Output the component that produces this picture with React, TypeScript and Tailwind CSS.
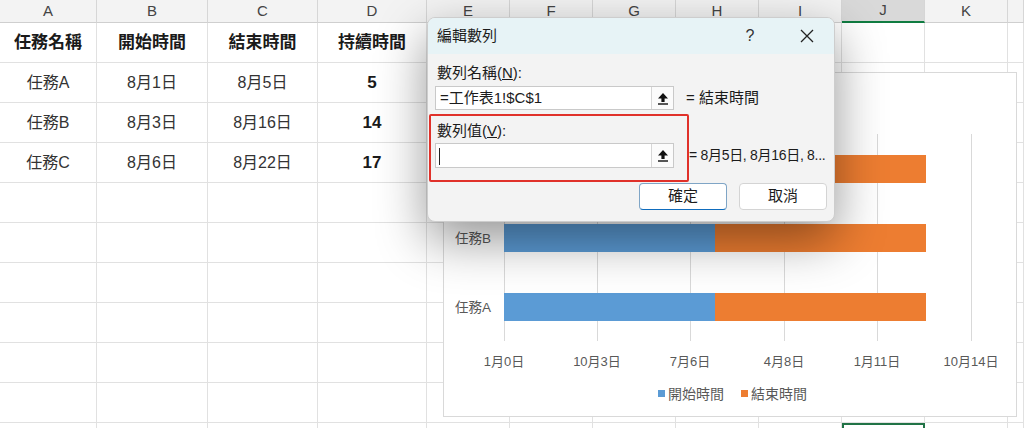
import React from 'react';

const font = { fontFamily: '"Liberation Sans", "Noto Sans CJK TC", sans-serif' };

const cols = [
  { k: 'A', c: 'w-[97px]' },
  { k: 'B', c: 'w-[111px]' },
  { k: 'C', c: 'w-[110px]' },
  { k: 'D', c: 'w-[109px]' },
  { k: 'E', c: 'w-[83px]' },
  { k: 'F', c: 'w-[83px]' },
  { k: 'G', c: 'w-[83px]' },
  { k: 'H', c: 'w-[83px]' },
  { k: 'I', c: 'w-[83px]' },
  { k: 'J', c: 'w-[83px]' },
  { k: 'K', c: 'w-[83px]' },
  { k: '', c: 'w-[16px]' },
];

const rows: { v: string[]; bold: boolean[] }[] = [
  { v: ['任務名稱', '開始時間', '結束時間', '持續時間'], bold: [true, true, true, true] },
  { v: ['任務A', '8月1日', '8月5日', '5'], bold: [false, false, false, true] },
  { v: ['任務B', '8月3日', '8月16日', '14'], bold: [false, false, false, true] },
  { v: ['任務C', '8月6日', '8月22日', '17'], bold: [false, false, false, true] },
  { v: [], bold: [] },
  { v: [], bold: [] },
  { v: [], bold: [] },
  { v: [], bold: [] },
  { v: [], bold: [] },
  { v: [], bold: [] },
  { v: [], bold: [] },
];

function UploadIcon() {
  return (
    <svg width="12" height="13" viewBox="0 0 12 13">
      <path d="M6 1 L11 6.5 L7.6 6.5 L7.6 10 L4.4 10 L4.4 6.5 L1 6.5 Z" fill="#111" />
      <rect x="1" y="11.3" width="10" height="1.4" fill="#111" />
    </svg>
  );
}

function Sheet() {
  return (
    <div className="flex flex-col">
      <div className="flex h-[23px]">
        {cols.map((c) => (
          <div
            key={c.k + 'h'}
            className={`${c.c} shrink-0 flex items-center justify-center text-[15px] text-[#444] border-r border-[#d6d6d6] ${
              c.k === 'J' ? 'bg-[#d9d9d9] border-b-2 border-b-[#107c41]' : 'bg-[#f3f3f3] border-b border-b-[#cfcfcf]'
            }`}
          >
            {c.k}
          </div>
        ))}
      </div>
      {rows.map((r, i) => (
        <div key={i} className="flex h-[40px]">
          {cols.map((c, j) => (
            <div
              key={c.k + i}
              className={`${c.c} shrink-0 flex items-center justify-center ${
                i === 10 && c.k === 'J' ? 'border-2 border-[#217346]' : 'border-r border-b border-[#e1e1e1]'
              } ${r.bold[j] ? 'font-bold text-[17px] text-[#1a1a1a]' : 'text-[16px] text-[#333]'}`}
            >
              {r.v[j] ?? ''}
            </div>
          ))}
        </div>
      ))}
    </div>
  );
}

function Chart() {
  const grid = [60, 153, 246, 340, 433, 527];
  const labels = ['1月0日', '10月3日', '7月6日', '4月8日', '1月11日', '10月14日'];
  const bars = [
    { y: 82, name: '任務C' },
    { y: 151, name: '任務B' },
    { y: 220, name: '任務A' },
  ];
  return (
    <div className="absolute left-[443px] top-[72px] w-[574px] h-[345px] bg-white border border-[#d9d9d9]">
      <svg width="572" height="343" viewBox="0 0 572 343" style={font}>
        {grid.map((x) => (
          <line key={x} x1={x + 0.5} x2={x + 0.5} y1="61" y2="268" stroke="#d9d9d9" strokeWidth="1" />
        ))}
        {bars.map((b) => (
          <g key={b.name}>
            <rect x="60" y={b.y} width="211" height="28" fill="#5b9bd5" />
            <rect x="271" y={b.y} width="211" height="28" fill="#ed7d31" />
            <text x="47" y={b.y + 19} textAnchor="end" fontSize="13.5" fill="#595959">
              {b.name}
            </text>
          </g>
        ))}
        {labels.map((l, i) => (
          <text key={l} x={grid[i]} y="293" textAnchor="middle" fontSize="13" fill="#595959">
            {l}
          </text>
        ))}
        <rect x="214" y="317" width="7" height="7" fill="#5b9bd5" />
        <text x="224" y="326" fontSize="14" fill="#595959">
          開始時間
        </text>
        <rect x="297" y="317" width="7" height="7" fill="#ed7d31" />
        <text x="307" y="326" fontSize="14" fill="#595959">
          結束時間
        </text>
      </svg>
    </div>
  );
}

function Dialog() {
  return (
    <div
      className="absolute left-[427px] top-[17px] w-[408px] h-[205px] rounded-lg border border-[#cdcdcd] bg-[#f3f3f3] shadow-[0_18px_50px_rgba(0,0,0,0.42)] overflow-hidden text-[15px] text-[#1b1b1b]"
      style={font}
    >
      <div className="h-[36px] bg-[#e7f3f6] flex items-center pl-[9px] pr-[14px]">
        <span className="flex-1">編輯數列</span>
        <span className="w-[20px] text-center text-[16px] text-[#333] mr-[40px]">?</span>
        <svg width="14" height="14" viewBox="0 0 14 14" className="mr-[6px]">
          <path d="M1 1 L13 13 M13 1 L1 13" stroke="#222" strokeWidth="1.3" />
        </svg>
      </div>
      <div className="pl-[7px] pt-[9px]">
        <div className="pl-[2px] h-[20px] leading-[20px]">
          數列名稱(<span className="underline">N</span>):
        </div>
        <div className="flex items-center mt-[3px]">
          <div className="w-[239px] h-[24px] bg-white border border-[#c9c9c9] flex items-center">
            <span className="flex-1 pl-[4px] truncate">=工作表1!$C$1</span>
            <div className="w-[22px] h-[22px] border-l border-[#d6d6d6] bg-[#fbfbfb] flex items-center justify-center">
              <UploadIcon />
            </div>
          </div>
          <span className="ml-[12px]">= 結束時間</span>
        </div>
        <div className="flex items-start mt-[4px]">
          <div className="shrink-0 -ml-[6px] w-[260px] h-[68px] border-2 border-[#e0312a] rounded-[2px] pl-[4px] pt-[5px]">
            <div className="pl-[2px] h-[20px] leading-[20px]">
              數列值(<span className="underline">V</span>):
            </div>
            <div className="w-[239px] h-[25px] mt-[2px] bg-white border border-[#c9c9c9] flex items-center">
              <span className="flex-1 pl-[3px]">
                <span className="inline-block w-px h-[17px] bg-[#222] align-middle" />
              </span>
              <div className="w-[22px] h-[23px] border-l border-[#d6d6d6] bg-[#fbfbfb] flex items-center justify-center">
                <UploadIcon />
              </div>
            </div>
          </div>
          <span className="mt-[31px] whitespace-nowrap text-[14px] tracking-[-0.3px]">= 8月5日, 8月16日, 8...</span>
        </div>
        <div className="flex justify-end gap-[12px] pr-[7px] mt-[1px]">
          <button className="w-[88px] h-[27px] bg-white border border-[#7fa5c6] border-b-[#0f6cbd] rounded-[4px] text-[15px]">
            確定
          </button>
          <button className="w-[88px] h-[27px] bg-white border border-[#d4d4d4] rounded-[4px] text-[15px]">
            取消
          </button>
        </div>
      </div>
    </div>
  );
}

export default function App() {
  return (
    <div className="relative w-[1024px] h-[428px] overflow-hidden bg-white" style={font}>
      <Sheet />
      <Chart />
      <Dialog />
    </div>
  );
}
